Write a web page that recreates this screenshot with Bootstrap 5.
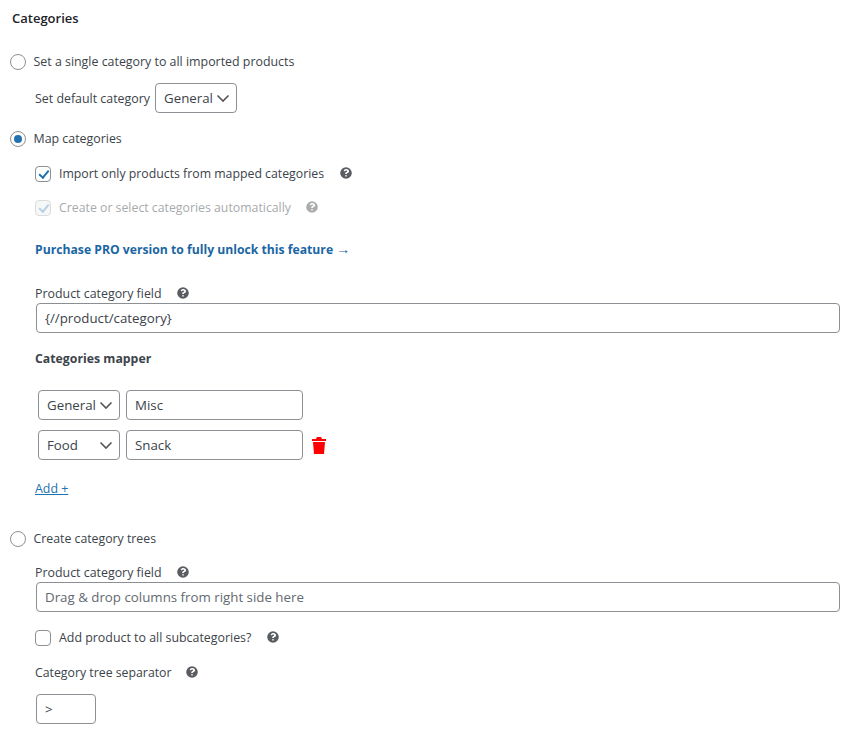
<!DOCTYPE html>
<html lang="en"><head><meta charset="utf-8"><title>Categories</title>
<link rel="stylesheet" href="https://cdn.jsdelivr.net/npm/bootstrap@5.3.0/dist/css/bootstrap.min.css">
<style>
body{font-family:"Open Sans","Noto Sans",sans-serif;font-size:12.4px;line-height:20px;color:#3c434a;background:#fff;margin:0}
.sheet{width:849px;height:747px;overflow:hidden;padding:8px 9px 0 9px}
.sheet-title{font-size:13px;font-weight:600;color:#1d2327;line-height:20px;margin:0 0 0 3px}
.rowline{display:flex;align-items:center;height:20px}
.tight{font-size:12.3px}
.opt-radio{appearance:none;width:16px;height:16px;border:1px solid #8c8f94;border-radius:50%;background:#fff;margin:0 7.5px 0 1px;flex:none;position:relative}
.opt-radio:checked::before{content:"";position:absolute;left:3px;top:3px;width:8px;height:8px;border-radius:50%;background:#2271b1}
.opt-check{appearance:none;width:16px;height:16px;border:1px solid #8c8f94;border-radius:4px;background:#fff;margin:0 8px 0 0;flex:none;position:relative}
.opt-check:checked::before{content:"";position:absolute;left:4.5px;top:1px;width:5.5px;height:10px;border:solid #2271b1;border-width:0 2px 2px 0;transform:rotate(40deg)}
.opt-check:disabled{border-color:#dcdcde;background:#f6f7f7}
.opt-check:disabled::before{border-color:#b5d0e6}
.is-off{color:#a7aaad}
.is-off .qmark{opacity:.5}
.indent{margin-left:26px}
.qmark{display:inline-block;flex:none;width:12px;height:12px;margin-left:15.5px;margin-top:-2px}
.tree-q{margin-left:14px}
.form-control.fld{height:30px;min-height:30px;line-height:28px;font-size:13.3px;padding:0 8px;border-radius:4px;border-color:#8c8f94;color:#3c434a;box-shadow:none}
.form-control.fld::placeholder{color:#646970;opacity:1}
.form-select.fld{height:30px;min-height:30px;line-height:28px;font-size:13.3px;padding:0 22px 0 8px;border-radius:4px;border-color:#8c8f94;color:#3c434a;background-position:right 5px center;background-size:16px 16px;background-image:url("data:image/svg+xml,%3csvg xmlns='http://www.w3.org/2000/svg' viewBox='0 0 16 16'%3e%3cpath fill='none' stroke='%23555' stroke-width='1.6' d='M2.5 5.5l5.5 5.5 5.5-5.5'/%3e%3c/svg%3e")}
.w-sel{width:82px}
.w-wide{width:804px;margin-left:1px;margin-top:-1px}
.w-txt{width:177px}
.w-sep{width:60px;margin-left:1px}
.lbl-gap{margin-right:5px;padding-top:2px}
.lnk-pro{color:#1a66a3;font-weight:700;font-size:12.2px;text-decoration:none}
.lnk-arrow{font-family:"Liberation Sans",sans-serif;font-size:14px}
.lnk-add{color:#2271b1;text-decoration:underline}
.sub-h{font-weight:700;font-size:12.3px;color:#3c434a}
.mapper{margin-left:29px;gap:6px}
.trash{margin-left:3px}
.t11{margin-top:11px}.t14{margin-top:14px}.t15{margin-top:15px}.t16{margin-top:16px}.t19{margin-top:19px}.t21{margin-top:21px}.t10{margin-top:10px}.t24{margin-top:24px}.t25{margin-top:25px}.t30{margin-top:30px}
</style></head><body>
<svg width="0" height="0" class="d-block position-absolute"><symbol id="q" viewBox="0 0 512 512"><path fill="#595c60" d="M256 8a248 248 0 1 0 0 496 248 248 0 0 0 0-496zm0 400a36 36 0 1 1 0-72 36 36 0 0 1 0 72zm34-123v5a12 12 0 0 1-12 12h-45a12 12 0 0 1-12-12v-7c0-40 30-56 53-69 20-11 32-18 32-33 0-19-25-32-45-32-26 0-38 12-55 34a12 12 0 0 1-17 2l-27-21a12 12 0 0 1-3-16c27-41 62-63 115-63 56 0 116 44 116 101 0 76-100 78-100 99z"/></symbol></svg>
<form class="sheet">
<h2 class="sheet-title">Categories</h2>
<div class="rowline t24"><input class="opt-radio" type="radio" name="m"><span>Set a single category to all imported products</span></div>
<div class="d-flex align-items-center indent t11"><span class="lbl-gap">Set default category</span><select class="form-select fld w-sel"><option>General</option></select></div>
<div class="rowline t16"><input class="opt-radio" type="radio" name="m" checked><span>Map categories</span></div>
<div class="rowline indent t15 tight"><input class="opt-check" type="checkbox" checked><span>Import only products from mapped categories</span><svg class="qmark"><use href="#q"/></svg></div>
<div class="rowline indent is-off t14 tight"><input class="opt-check" type="checkbox" checked disabled><span>Create or select categories automatically</span><svg class="qmark"><use href="#q"/></svg></div>
<div class="rowline indent t21"><a class="lnk-pro" href="#">Purchase PRO version to fully unlock this feature <span class="lnk-arrow">→</span></a></div>
<div class="rowline indent t25"><span>Product category field</span><svg class="qmark"><use href="#q"/></svg></div>
<div class="indent"><input class="form-control fld w-wide" value="{//product/category}"></div>
<div class="rowline indent t16 sub-h">Categories mapper</div>
<div class="mapper t21 d-flex"><select class="form-select fld w-sel"><option>General</option></select><input class="form-control fld w-txt" value="Misc"></div>
<div class="mapper t10 d-flex align-items-center"><select class="form-select fld w-sel"><option>Food</option></select><input class="form-control fld w-txt" value="Snack"><svg class="trash" width="14" height="17" viewBox="0 0 14 17"><path fill="#f00" d="M5 0h4l1 2h4v2H0V2h4zM1 5h12l-1 12H2z"/></svg></div>
<div class="rowline indent t19"><a class="lnk-add" href="#">Add +</a></div>
<div class="rowline t30 tight"><input class="opt-radio" type="radio" name="m"><span>Create category trees</span></div>
<div class="rowline indent t14"><span>Product category field</span><svg class="qmark"><use href="#q"/></svg></div>
<div class="indent"><input class="form-control fld w-wide" placeholder="Drag &amp; drop columns from right side here"></div>
<div class="rowline indent t16"><input class="opt-check" type="checkbox"><span>Add product to all subcategories?</span><svg class="qmark"><use href="#q"/></svg></div>
<div class="rowline indent t15 tight"><span>Category tree separator</span><svg class="qmark tree-q"><use href="#q"/></svg></div>
<div class="indent t11"><input class="form-control fld w-sep" value="&gt;"></div>
</form>
</body></html>
